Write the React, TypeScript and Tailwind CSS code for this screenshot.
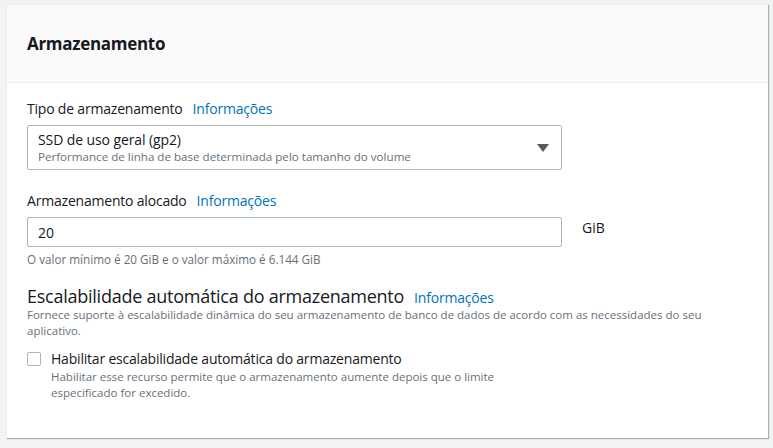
const font = { fontFamily: '"Open Sans", "Noto Sans", sans-serif' };

const Info = ({ className = "" }: { className?: string }) => (
  <a className={"text-[14px] tracking-[-0.2px] text-[#0073bb] ml-[10px] " + className}>Informações</a>
);

export default function App() {
  return (
    <div style={font} className="w-[773px] h-[448px] bg-[#f2f3f3] pt-[4px] pl-[6px] pr-[5px]">
      <section className="bg-white border-l border-t border-[#eaeded] shadow-[1px_1px_1px_0_rgba(0,28,36,0.3)] h-[434px]">
        <header className="bg-[#fafafa] border-b border-[#eaeded] h-[78px] flex items-center px-[20px]">
          <h2 className="text-[17px] font-bold text-[#16191f] tracking-[-0.3px]">Armazenamento</h2>
        </header>

        <div className="px-[20px] pt-[15px] text-[#16191f]">
          <div className="flex items-baseline text-[14px] leading-[22px] tracking-[-0.2px]">
            <span>Tipo de armazenamento</span>
            <Info />
          </div>
          <div className="mt-[5px] w-[535px] h-[45px] border border-[#aab7b8] rounded-[2px] flex items-center justify-between pl-[10px] pr-[12px]">
            <div className="flex flex-col">
              <span className="text-[14px] leading-[18px] tracking-[-0.1px]">SSD de uso geral (gp2)</span>
              <span className="text-[11.6px] leading-[16px] text-[#687078]">
                Performance de linha de base determinada pelo tamanho do volume
              </span>
            </div>
            <svg width="12" height="10" viewBox="0 0 12 10">
              <path d="M0 1h12L6 9z" fill="#545b64" />
            </svg>
          </div>

          <div className="mt-[20px] flex items-baseline text-[14px] leading-[22px] tracking-[-0.2px]">
            <span>Armazenamento alocado</span>
            <Info />
          </div>
          <div className="mt-[5px] flex items-start">
            <div className="w-[535px] h-[30px] border border-[#aab7b8] rounded-[2px] flex items-center px-[10px] text-[14px]">
              20
            </div>
            <span className="ml-[20px] text-[14px] leading-[22px]">GiB</span>
          </div>
          <p className="mt-[4px] text-[11.7px] leading-[16px] text-[#687078]">
            O valor mínimo é 20 GiB e o valor máximo é 6.144 GiB
          </p>

          <div className="mt-[17px] flex items-baseline">
            <span className="text-[18px] leading-[24px] tracking-[-0.25px]">Escalabilidade automática do armazenamento</span>
            <Info className="ml-[9px]" />
          </div>
          <p className="-mt-[1px] text-[11.5px] leading-[16px] text-[#687078] w-[700px]">
            Fornece suporte à escalabilidade dinâmica do seu armazenamento de banco de dados de acordo com as necessidades do seu aplicativo.
          </p>

          <div className="mt-[10px] flex items-start">
            <div className="mt-[3px] w-[14px] h-[14px] border border-[#aab7b8] rounded-[2px] bg-white" />
            <div className="ml-[10px] flex flex-col">
              <span className="text-[14px] leading-[20px] tracking-[-0.2px]">Habilitar escalabilidade automática do armazenamento</span>
              <span className="text-[11.5px] leading-[16px] text-[#687078] w-[470px]">
                Habilitar esse recurso permite que o armazenamento aumente depois que o limite especificado for excedido.
              </span>
            </div>
          </div>
        </div>
      </section>
    </div>
  );
}
